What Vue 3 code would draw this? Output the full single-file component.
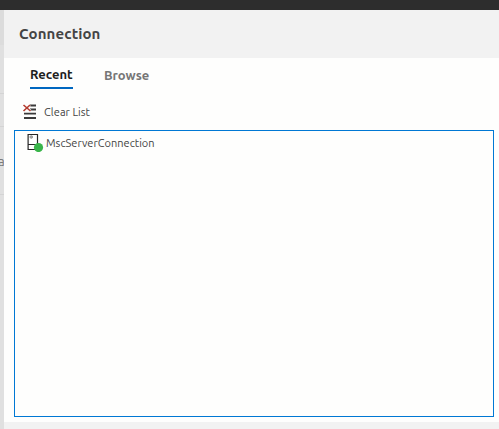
<script setup>
const tabs = [
  { label: 'Recent', active: true },
  { label: 'Browse', active: false },
]
const connections = ['MscServerConnection']
const rows = [{ id: 'a' }, { id: 'b' }, { id: 'c' }, { id: 'd', text: 'a' }, { id: 'e' }]
</script>

<template>
  <div class="window">
    <div class="titlebar"></div>
    <div class="body">
      <aside class="behind">
        <div v-for="row in rows" :key="row.id" class="behind-row" :class="row.id">{{ row.text }}</div>
      </aside>
      <main class="panel">
        <header class="header"><span class="title">Connection</span></header>
        <nav class="tabs">
          <span v-for="tab in tabs" :key="tab.label" class="tab" :class="{ active: tab.active }">{{ tab.label }}</span>
        </nav>
        <div class="toolbar">
          <svg class="clear-icon" width="15" height="16" viewBox="0 0 15 16">
            <path d="M8 1.5h6M8 5.5h6M2 9.7h12M2 14h12" stroke="#3b3b3b" stroke-width="1.8" fill="none" />
            <path d="M1.5 1l7 6M8 1L1.5 7" stroke="#fefefd" stroke-width="2.6" fill="none" />
            <path d="M1.5 1l7 6M8 1L1.5 7" stroke="#b33a2e" stroke-width="1.6" fill="none" />
          </svg>
          <span class="clear-label">Clear List</span>
        </div>
        <section class="list">
          <div v-for="name in connections" :key="name" class="item">
            <svg class="server-icon" width="17" height="19" viewBox="0 0 17 19">
              <path d="M1.1 1.5h9.4v15H1.1zM1.1 11.5h9.4" stroke="#262626" stroke-width="1.2" fill="#fff" />
              <path d="M2.6 4h3.4M4.3 2.3v3.4" stroke="#a0a0a0" stroke-width="1.8" />
              <circle cx="11.5" cy="14.5" r="4.6" fill="#39b54a" />
            </svg>
            <span class="item-label">{{ name }}</span>
          </div>
        </section>
        <footer class="footer"></footer>
      </main>
    </div>
  </div>
</template>

<style>
body { margin: 0; }
</style>

<style scoped>
.window {
  width: 499px;
  height: 429px;
  overflow: hidden;
  display: flex;
  flex-direction: column;
  font-family: Ubuntu, "Noto Sans", "Open Sans", sans-serif;
  color: #444;
  white-space: nowrap;
}
.titlebar { height: 10px; background: #2d2d2d; }
.body { display: flex; height: 419px; }
.behind { width: 4px; background: #e0e0e0; overflow: hidden; }
.behind-row { box-sizing: border-box; border-bottom: 1px solid #d4d4d4; }
.behind-row.a { height: 35px; background: #dcdcdc; border: 0; }
.behind-row.b { height: 49px; }
.behind-row.c { height: 33px; }
.behind-row.d {
  height: 68px;
  font-size: 13px;
  line-height: 69px;
  color: #777;
  text-indent: -2px;
}
.behind-row.e { border: 0; }
.panel {
  flex: 1;
  display: flex;
  flex-direction: column;
  background: #fefefd;
}
.header {
  height: 48px;
  box-sizing: border-box;
  padding-left: 15px;
  background: #f2f2f2;
}
.title { font-size: 15px; font-weight: 700; line-height: 48px; letter-spacing: 0.1px; }
.tabs { display: flex; gap: 31px; height: 31px; padding-left: 26px; }
.tab {
  box-sizing: border-box;
  width: 43px;
  height: 31px;
  padding-top: 8px;
  font-size: 13px;
  font-weight: 700;
  line-height: 18px;
  color: #757575;
}
.tab.active {
  padding-top: 7px;
  color: #1e1e1e;
  border-bottom: 2px solid #0067c0;
}
.toolbar { display: flex; height: 41px; padding: 14px 0 0 18px; box-sizing: border-box; }
.clear-icon { display: block; margin: 1px 7px 0 0; }
.clear-label { font-size: 11px; line-height: 18px; letter-spacing: 0.06px; }
.list {
  box-sizing: border-box;
  height: 287px;
  margin: 0 5px 0 10px;
  border: 1px solid #0078d4;
}
.item { display: flex; padding: 2px 0 0 12px; }
.server-icon { display: block; margin-right: 2px; }
.item-label { font-size: 11px; line-height: 20px; letter-spacing: 0.04px; }
.footer { height: 7px; margin-top: 5px; background: #f2f2f2; }
</style>
